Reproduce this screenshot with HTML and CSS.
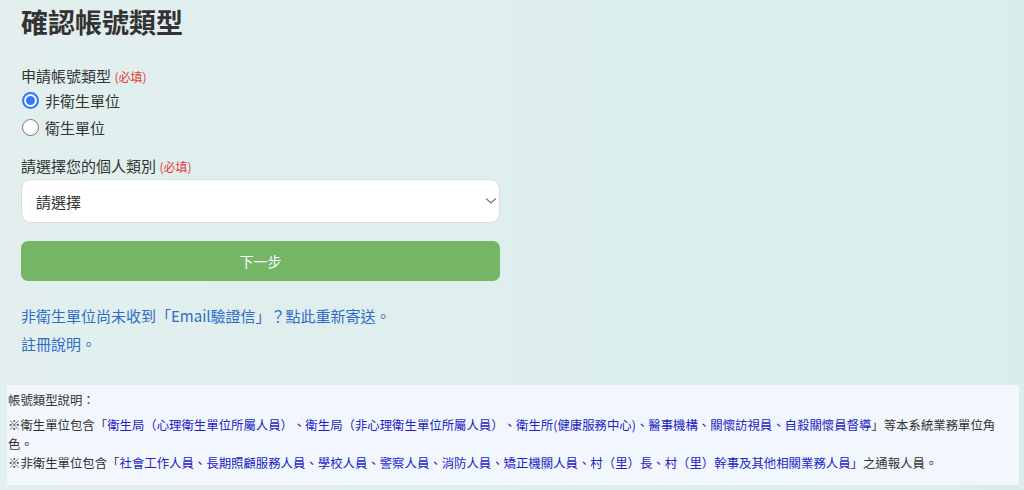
FILE: index.html
```html
<!DOCTYPE html>
<html lang="zh-Hant">
<head>
    <meta charset="UTF-8">
    <meta name="viewport" content="width=device-width, initial-scale=1.0">
    <title>確認帳號類型</title>
    <link rel="stylesheet" href="styles.css">
</head>
<body>
    <div class="main">
        <h1 class="title">確認帳號類型</h1>

        <div class="field">
            <p class="label">申請帳號類型 <span class="req">(必填)</span></p>
            <label class="radio">
                <input type="radio" name="unitType" checked>
                <span>非衛生單位</span>
            </label>
            <label class="radio">
                <input type="radio" name="unitType">
                <span>衛生單位</span>
            </label>
        </div>

        <div class="field field2">
            <p class="label">請選擇您的個人類別 <span class="req">(必填)</span></p>
            <div class="selectBox">
                <select>
                    <option>請選擇</option>
                </select>
                <svg class="arrow" width="12" height="8" viewBox="0 0 12 8">
                    <path d="M1 1.5 L6 6 L11 1.5" fill="none" stroke="#777" stroke-width="1.2"/>
                </svg>
            </div>
        </div>

        <a href="javascript:;" class="nextBtn">下一步</a>

        <div class="links">
            <a href="javascript:;">非衛生單位尚未收到「Email驗證信」？點此重新寄送。</a>
            <a href="javascript:;">註冊說明。</a>
        </div>
    </div>

    <div class="info">
        <p class="infoTitle">帳號類型說明：</p>
        <p>※衛生單位包含「<span class="blue">衛生局（心理衛生單位所屬人員）、衛生局（非心理衛生單位所屬人員）、衛生所(健康服務中心)、醫事機構、關懷訪視員、自殺關懷員督導</span>」等本系統業務單位角色。</p>
        <p>※非衛生單位包含「<span class="blue">社會工作人員、長期照顧服務人員、學校人員、警察人員、消防人員、矯正機關人員、村（里）長、村（里）幹事及其他相關業務人員</span>」之通報人員。</p>
    </div>
</body>
</html>
```

FILE: styles.css
```css
*{
    margin: 0;
    padding: 0;
    box-sizing: border-box;
}
a{
    text-decoration: none;
}
body{
    font-family: "Noto Sans CJK TC", "Noto Sans", sans-serif;
    color: #333;
    background: linear-gradient(90deg, #e2efee, #d9eeeb);
    height: 490px;
    overflow: hidden;
    text-spacing-trim: space-all;
}
.main{
    padding: 0 21px;
    width: 521px;
}
.title{
    font-size: 27px;
    font-weight: 700;
    line-height: 36px;
    margin-top: 4px;
    color: #333;
}
.label{
    font-size: 15px;
    line-height: 20px;
}
.req{
    font-size: 12px;
    color: #e53935;
}
.field{
    margin-top: 26px;
}
.field2{
    margin-top: 15px;
}
.field2 .label{
    margin-bottom: 2px;
}
.radio{
    display: flex;
    align-items: center;
    height: 27px;
    font-size: 15px;
}
.radio input{
    appearance: none;
    -webkit-appearance: none;
    width: 17px;
    height: 17px;
    border-radius: 50%;
    border: 1px solid #777;
    background: #fff;
    margin-right: 6px;
    margin-left: 1px;
}
.radio input:checked{
    border: 2px solid #3479f6;
    box-shadow: inset 0 0 0 2px #fff, inset 0 0 0 8px #3479f6;
}
.selectBox{
    position: relative;
    height: 44px;
}
.selectBox select{
    appearance: none;
    -webkit-appearance: none;
    width: 100%;
    height: 44px;
    border: 1px solid #dcdcdc;
    border-radius: 10px;
    background: #fff;
    padding-left: 14px;
    font-family: inherit;
    font-size: 15px;
    color: #333;
}
.selectBox .arrow{
    position: absolute;
    right: 3px;
    top: 18px;
    pointer-events: none;
}
.nextBtn{
    display: flex;
    justify-content: center;
    align-items: center;
    margin-top: 18px;
    height: 40px;
    border-radius: 7px;
    background: #74b566;
    color: #fff;
    font-size: 14px;
}
.links{
    margin-top: 21px;
}
.links a{
    display: block;
    font-size: 15px;
    line-height: 28px;
    color: #2f6cc8;
}
.info{
    margin: 27px 5px 0 7px;
    background: #f1f7fd;
    padding: 6px 2px 12px 1px;
    font-size: 12.4px;
    line-height: 19px;
}
.infoTitle{
    margin-bottom: 6px;
}
.blue{
    color: #2323c4;
}
```
